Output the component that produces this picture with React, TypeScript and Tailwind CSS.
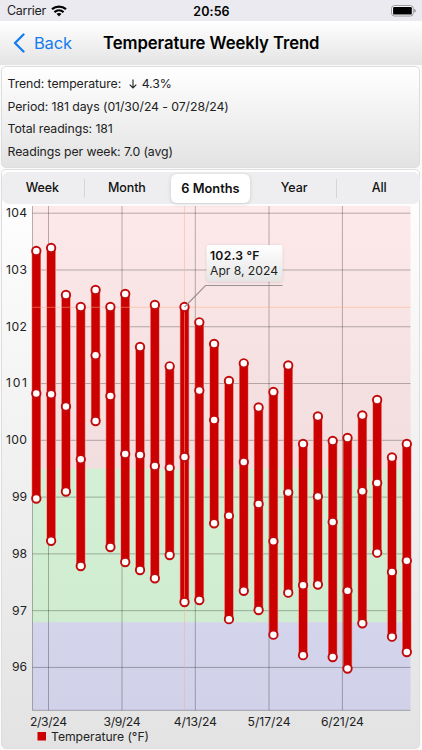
type Reading = [number, number, number];

const weeks: Reading[] = [
  [251, 393.5, 498.5],
  [248, 394.3, 540.8],
  [295, 406.5, 491.5],
  [307, 459.3, 566],
  [290, 355.3, 421],
  [307, 396, 547],
  [294, 454, 562],
  [347, 455, 570],
  [305, 466, 578.3],
  [366.3, 467.8, 555],
  [307, 457, 602],
  [322.3, 390.5, 600],
  [344, 420, 523.3],
  [381, 515.8, 619.2],
  [363.3, 462, 590.8],
  [407.5, 504, 610],
  [392, 541.2, 634.7],
  [365.5, 492.5, 592.7],
  [444, 585.2, 655.2],
  [416.5, 496.5, 584.5],
  [441, 522, 657],
  [438, 590.7, 668.5],
  [415.5, 491.3, 623.3],
  [400, 483, 552.7],
  [457.5, 572, 636.7],
  [444, 560.7, 652],
];

const degrees = [104, 103, 102, 101, 100, 99, 98, 97, 96];
const dates = [
  { label: "2/3/24", x: 48.5 },
  { label: "3/9/24", x: 122 },
  { label: "4/13/24", x: 195.3 },
  { label: "5/17/24", x: 269 },
  { label: "6/21/24", x: 342.4 },
];

const weekX = (i: number) => 36.3 + i * 14.82;
const degreeY = (d: number) => 213.2 + (104 - d) * 56.78;

function StatusBar() {
  return (
    <div className="flex h-[21px] items-center bg-[#ebeaf1] pl-[7px] pr-[6px] text-[#222]">
      <div className="flex flex-1 items-center gap-[5px]">
        <span className="text-[12.5px] leading-[21px] tracking-[-0.3px]">Carrier</span>
        <svg width="16" height="12" viewBox="0 0 16 12" className="mt-px" fill="none" stroke="#000">
          <path d="M1 4.2C5 .7 11 .7 15 4.2" strokeWidth="2.3" />
          <path d="M3.4 7.1C6.2 4.8 9.8 4.8 12.6 7.1" strokeWidth="2.1" />
          <path d="M5.5 8.8C7.1 7.6 8.9 7.6 10.5 8.8L8 11.4Z" fill="#000" stroke="none" />
        </svg>
      </div>
      <span className="pt-px text-[12.5px] font-semibold leading-[21px] text-black tracking-[0.1px]">20:56</span>
      <div className="flex flex-1 justify-end">
        <svg width="25" height="12" viewBox="0 0 25 12">
          <rect x=".6" y=".6" width="21.6" height="10.4" rx="2.8" fill="#fff" stroke="#939398" />
          <rect x="2.1" y="2" width="18.7" height="7.6" rx="1.2" fill="#000" />
          <path d="M23.4 4c1 .3 1.2 1 1.2 1.8s-.2 1.5-1.2 1.8Z" fill="#77777c" />
        </svg>
      </div>
    </div>
  );
}

function NavBar() {
  return (
    <div className="flex h-[44px] items-center bg-linear-to-b from-white to-[#e4e4e4]">
      <div className="flex w-[103px] items-center gap-[9px] pl-[13px] text-[#147cf0]">
        <svg width="12" height="20" viewBox="0 0 12 20" fill="none" stroke="currentColor">
          <path d="M10.5 1.5L2 10l8.5 8.5" strokeWidth="2.3" strokeLinecap="round" strokeLinejoin="round" />
        </svg>
        <span className="text-[16.5px] tracking-[-0.2px]">Back</span>
      </div>
      <h1 className="whitespace-nowrap pt-[2px] text-[16.7px] font-semibold tracking-[-0.07px] text-black">
        Temperature Weekly Trend
      </h1>
    </div>
  );
}

function Summary() {
  return (
    <div className="mt-[1px] mr-[2px] ml-[1px] flex h-[102px] flex-col rounded-[5px] border-[1.5px] border-[#dedede] bg-linear-to-b from-white to-[#e3e3e3] pl-[5.5px] pt-[6px] text-[12.3px] leading-[22.7px] tracking-[-0.08px] text-[#222]">
      <p className="flex items-center">
        Trend: temperature:
        <svg width="8" height="10" viewBox="0 0 8 10" className="ml-[7.5px] mr-[5px]" fill="none" stroke="#222" strokeWidth="1.1">
          <path d="M4 .5v8.5M.7 5.7L4 9l3.3-3.3" />
        </svg>
        4.3%
      </p>
      <p>Period: 181 days (01/30/24 - 07/28/24)</p>
      <p>Total readings: 181</p>
      <p>Readings per week: 7.0 (avg)</p>
    </div>
  );
}

function RangeTabs() {
  const tab = "flex items-center justify-center";
  return (
    <div className="-mr-px grid h-[32px] grid-cols-5 rounded-[7px] bg-[#eeeef0] text-[12.5px] font-medium tracking-[-0.1px] text-[#111]">
      <div className={`${tab} my-[7px] mr-px border-r border-[#d5d5d8] pr-px`}>Week</div>
      <div className={`${tab} pr-px`}>Month</div>
      <div className={`${tab} my-[2px] mr-[3px] ml-[2px] rounded-[6px] bg-white text-[12.8px] font-semibold tracking-[0px] shadow-[0_1px_4px_rgba(0,0,0,0.15)]`}>
        6 Months
      </div>
      <div className={`${tab} my-[7px] -mr-px border-r border-[#d5d5d8] pr-px`}>Year</div>
      <div className={`${tab} pl-[2px]`}>All</div>
    </div>
  );
}

function TrendChart() {
  return (
    <svg width="418" height="543" viewBox="2 204 418 543" className="block">
      <defs>
        <linearGradient id="callout" x1="0" y1="0" x2="0" y2="1">
          <stop offset="0" stopColor="#fff" />
          <stop offset="1" stopColor="#e5e5e5" />
        </linearGradient>
        <filter id="lift" x="-10%" y="-15%" width="120%" height="135%">
          <feDropShadow dx="0" dy="0.5" stdDeviation="0.8" floodOpacity="0.18" />
        </filter>
      </defs>

      {/* fever, normal and low zones */}
      <rect x="32.5" y="206" width="378" height="262.6" fill="#ff0000" fillOpacity="0.08" />
      <rect x="32.5" y="468.6" width="378" height="153.7" fill="#b8f0b8" fillOpacity="0.5" />
      <rect x="32.5" y="622.3" width="378" height="88" fill="#8080ff" fillOpacity="0.2" />

      <g stroke="#000" strokeOpacity="0.28" strokeWidth="1">
        {degrees.map((d) => (
          <line key={d} x1="32.5" x2="410.5" y1={degreeY(d)} y2={degreeY(d)} />
        ))}
        {dates.map((d) => (
          <line key={d.label} x1={d.x} x2={d.x} y1="206" y2="710.3" />
        ))}
        <path d="M32.5 206V710.3H410.5" fill="none" />
      </g>

      {weeks.map(([high, , low], i) => (
        <g key={i}>
          <line x1={weekX(i)} x2={weekX(i)} y1={high} y2={low} stroke="#ee8c86" strokeWidth="9.4" />
          <line x1={weekX(i)} x2={weekX(i)} y1={high} y2={low} stroke="#cb0000" strokeWidth="8.2" />
        </g>
      ))}

      {/* crosshair of the selected week */}
      <g stroke="#ffb08a" strokeOpacity="0.55" strokeWidth="0.9">
        <line x1="32.5" x2="410.5" y1="307.3" y2="307.3" />
        <line x1="184.5" x2="184.5" y1="206" y2="710" />
      </g>

      {weeks.map((readings, i) =>
        readings.map((y, j) => (
          <circle key={`${i}-${j}`} cx={weekX(i)} cy={y} r="4.2" fill="#fff" stroke="#c20a0c" strokeWidth="1.9" />
        ))
      )}

      <path d="M184.5 307L205.5 285.5H282.5" fill="none" stroke="#999093" strokeWidth="1.1" />
      <rect x="206.5" y="245" width="76" height="36.5" rx="2.5" fill="url(#callout)" filter="url(#lift)" />
      <text x="210" y="260" fontSize="12.2" fontWeight="600" textLength="49.5" fill="#111">102.3 °F</text>
      <text x="210" y="274.7" fontSize="12.2" textLength="68" fill="#222">Apr 8, 2024</text>

      <g fontSize="12.2" fill="#222">
        {degrees.map((d) => (
          <text key={d} x="27" y={degreeY(d) + 3.9} textAnchor="end" textLength={d > 99 ? 21 : 15}>
            {d}
          </text>
        ))}
        {dates.map((d) => (
          <text key={d.label} x={d.x} y="726" textAnchor="middle" textLength={d.label.length > 6 ? 43 : 37}>
            {d.label}
          </text>
        ))}
        <rect x="37.5" y="732" width="8.5" height="8.5" fill="#cb0000" />
        <text x="51" y="741" textLength="98">Temperature (°F)</text>
      </g>
    </svg>
  );
}

export default function App() {
  return (
    <div className="flex h-[750px] w-[422px] flex-col overflow-hidden bg-[#fafafa] font-[Inter,'Liberation_Sans',sans-serif]">
      <StatusBar />
      <NavBar />
      <Summary />
      <div className="mt-[1px] ml-[1px] mr-[2px] flex h-[580px] flex-col rounded-[5px] border border-[#dedede] bg-linear-to-b from-white to-[#e3e3e3] pt-[2px]">
        <RangeTabs />
        <TrendChart />
      </div>
    </div>
  );
}
